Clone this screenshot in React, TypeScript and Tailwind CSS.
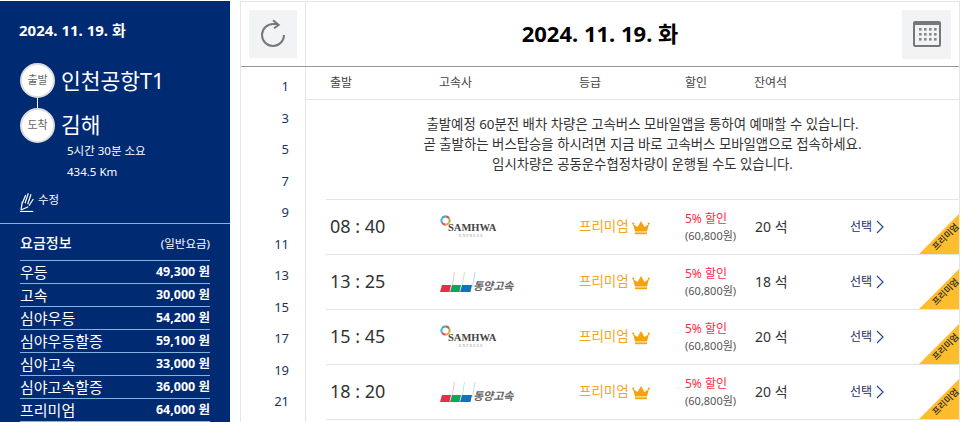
const FONT = "font-['Noto_Sans','Noto_Sans_CJK_KR',sans-serif]";

const fares: [string, string][] = [
  ['우등', '49,300 원'],
  ['고속', '30,000 원'],
  ['심야우등', '54,200 원'],
  ['심야우등할증', '59,100 원'],
  ['심야고속', '33,000 원'],
  ['심야고속할증', '36,000 원'],
  ['프리미엄', '64,000 원'],
];

const rows = [
  { time: '08 : 40', logo: 'samhwa', seats: '20 석' },
  { time: '13 : 25', logo: 'dongyang', seats: '18 석' },
  { time: '15 : 45', logo: 'samhwa', seats: '20 석' },
  { time: '18 : 20', logo: 'dongyang', seats: '20 석' },
];

const hours = [1, 3, 5, 7, 9, 11, 13, 15, 17, 19, 21];

function Samhwa() {
  return (
    <div className="relative h-[24px] w-[56px]">
      <svg viewBox="0 0 12 12" className="absolute left-0 top-0 h-[11px] w-[11px]" fill="none" strokeWidth="2.2">
        <path d="M6 1.5 A4.5 4.5 0 0 1 10 4" stroke="#e0457b" />
        <path d="M10 4 A4.5 4.5 0 0 1 10 8" stroke="#8cc63f" />
        <path d="M10 8 A4.5 4.5 0 0 1 6 10.5" stroke="#f5a623" />
        <path d="M6 10.5 A4.5 4.5 0 0 1 2 8" stroke="#e0457b" />
        <path d="M2 8 A4.5 4.5 0 0 1 2 4" stroke="#3ab4d8" />
        <path d="M2 4 A4.5 4.5 0 0 1 6 1.5" stroke="#35b7a4" />
      </svg>
      <span className="absolute left-[8px] top-[8px] font-['Liberation_Serif',serif] text-[10.5px] font-bold leading-[10px] text-[#444]">SAMHWA</span>
      <span className="absolute left-[19px] top-[18px] font-['Liberation_Serif',serif] text-[4px] leading-[5px] tracking-[1px] text-[#999]">EXPRESS</span>
    </div>
  );
}

function Dongyang() {
  return (
    <div className="flex items-end">
      <svg viewBox="0 0 36 21" className="h-[21px] w-[36px] shrink-0">
        <path d="M14.5 0 L12 15" stroke="#f5b5bd" strokeWidth="0.8" />
        <path d="M24.5 0 L22 15" stroke="#b2e2c4" strokeWidth="0.8" />
        <path d="M35 0 L32.5 15" stroke="#acd0ee" strokeWidth="0.8" />
        <path d="M2 13 H11 L9.5 20 H0 Z" fill="#ee2a48" />
        <path d="M12 13 H21 L19.5 20 H10 Z" fill="#0ea55a" />
        <path d="M22 13 H32 L30.5 20 H20 Z" fill="#1273bb" />
      </svg>
      <span className="mb-[-1px] ml-[-3px] text-[11px] font-bold italic leading-[16px] text-[#666]">동양고속</span>
    </div>
  );
}

function Crown() {
  return (
    <svg viewBox="0 0 18 15" className="ml-[3px] mt-[2px] h-[15px] w-[18px]">
      <path d="M1 4 L5.5 7 L9 1 L12.5 7 L17 4 L15 11.5 H3 Z" fill="#f4a30d" />
      <circle cx="1.2" cy="3.6" r="1.1" fill="#f4a30d" />
      <circle cx="16.8" cy="3.6" r="1.1" fill="#f4a30d" />
      <rect x="3" y="12.4" width="12" height="1.8" fill="#f4a30d" />
    </svg>
  );
}

function Row({ time, logo, seats }: { time: string; logo: string; seats: string }) {
  return (
    <div className="relative flex h-[55px] items-center border-b border-[#e5e5e5]">
      <div className="mb-[2px] w-[114px] pl-[4px] text-[18px] text-[#333]">{time}</div>
      <div className="w-[139px]">{logo === 'samhwa' ? <Samhwa /> : <Dongyang />}</div>
      <div className="mb-[2px] flex w-[106px] items-center text-[13.5px] text-[#f4a620]">
        프리미엄
        <Crown />
      </div>
      <div className="w-[70px] leading-[17px]">
        <div className="text-[12px] text-[#ff2a44]">5% 할인</div>
        <div className="text-[11px] text-[#555]">(60,800원)</div>
      </div>
      <div className="mb-[2px] w-[95px] text-[14px] text-[#333]">{seats}</div>
      <div className="mb-px flex items-center text-[12px] text-[#1c2f66]">
        선택
        <svg viewBox="0 0 8 14" className="ml-[4px] h-[14px] w-[8px]" fill="none" stroke="#274a9c" strokeWidth="1.2">
          <path d="M1 1 L7 7 L1 13" />
        </svg>
      </div>
      <div className="absolute bottom-0 right-0 h-0 w-0 border-b-[40px] border-l-[40px] border-b-[#fdbd2c] border-l-transparent" />
      <span className="absolute bottom-[12px] right-[-3px] -rotate-45 text-[9px] font-medium leading-[10px] text-[#222]">프리미엄</span>
    </div>
  );
}

export default function App() {
  return (
    <div className={`${FONT} flex h-[422px] w-[963px] overflow-hidden bg-white`}>
      <aside className="mt-px w-[230px] shrink-0 bg-[#002a71] text-white">
        <div className="h-[223px] border-b border-[#7db4e0] px-[19px] pt-[19px]">
          <div className="text-[15px] font-bold leading-[20px]">2024. 11. 19. 화</div>
          <div className="relative ml-px mt-[23px]">
            <div className="flex items-center">
              <div className="flex h-[35px] w-[35px] items-center justify-center rounded-full border-2 border-[#ddd] bg-white text-[11px] text-[#666]">출발</div>
              <div className="ml-[6px] text-[21.5px] leading-[30px]">인천공항T1</div>
            </div>
            <div className="ml-[17px] h-[10px] w-px bg-white" />
            <div className="flex items-center">
              <div className="flex h-[35px] w-[35px] items-center justify-center rounded-full border-2 border-[#ddd] bg-white text-[11px] text-[#666]">도착</div>
              <div className="mb-[2px] ml-[6px] text-[21.5px] leading-[30px]">김해</div>
            </div>
          </div>
          <div className="ml-[48px] mt-[-3px] text-[11.5px] leading-[21px]">
            <div>5시간 30분 소요</div>
            <div>434.5 Km</div>
          </div>
          <div className="mt-[9px] flex items-center">
            <svg viewBox="0 0 16 21" className="h-[21px] w-[16px]" fill="none" stroke="white" strokeWidth="1.2">
              <path d="M1 20.5 H14.3" />
              <path d="M3.3 12.3 L6.7 4 M6 12.3 L9.3 2.3 M8.7 13.3 L12 3.3 M10 14.7 L14.3 8 M2 19 L3.3 10.7 M2 19 L9.3 15.7" />
            </svg>
            <span className="mb-[3px] ml-[3px] text-[11.5px]">수정</span>
          </div>
        </div>
        <div className="px-[20px]">
          <div className="flex h-[37px] items-center justify-between border-b border-[#7db4e0]">
            <span className="text-[14px] font-medium">요금정보</span>
            <span className="mt-[3px] text-[11.5px]">(일반요금)</span>
          </div>
          {fares.map(([name, price]) => (
            <div key={name} className="flex h-[23px] items-center justify-between border-b border-[#7db4e0]">
              <span className="text-[15px]">{name}</span>
              <span className="text-[12.5px] font-bold">{price}</span>
            </div>
          ))}
        </div>
      </aside>
      <main className="ml-[10px] mr-[3px] mt-px flex h-[421px] flex-1 flex-col border-x border-t border-[#e5e5e5]">
        <header className="flex h-[65px] shrink-0 items-center border-b border-[#999]">
          <div className="flex h-full w-[65px] shrink-0 items-center border-r border-[#e5e5e5] pl-[8px]">
            <div className="flex h-[48px] w-[48px] items-center justify-center bg-[#f2f3f5]">
              <svg viewBox="0 0 48 48" className="h-[48px] w-[48px]" fill="none" stroke="#777" strokeWidth="2">
                <path d="M35 25 A11 11 0 1 1 24 14 H29" />
                <path d="M24 10.3 L29.7 15 L25 18.3" />
              </svg>
            </div>
          </div>
          <div className="mb-[2px] flex-1 pr-[8px] text-center text-[22px] font-bold text-black">2024. 11. 19. 화</div>
          <div className="mr-[8px] flex h-[49px] w-[49px] items-center justify-center bg-[#f2f3f5]">
            <svg viewBox="0 0 28 26" className="h-[26px] w-[28px]">
              <rect x="1" y="1" width="26" height="24" rx="1" fill="none" stroke="#777" strokeWidth="2" />
              <rect x="1" y="1" width="26" height="3" fill="#777" />
              {[7, 12, 17].map((y) =>
                [6, 11, 16, 21].map((x) => <rect key={`${x}-${y}`} x={x} y={y} width="2.6" height="2.6" fill="#888" />),
              )}
            </svg>
          </div>
        </header>
        <div className="flex min-h-0 flex-1">
          <div className="w-[65px] shrink-0 border-r border-[#e5e5e5] pr-[16px] pt-[4px] text-right text-[13px] leading-[31.5px] text-[#17365f]">
            {hours.map((h) => (
              <div key={h}>{h}</div>
            ))}
          </div>
          <div className="min-w-0 flex-1">
            <div className="flex h-[33px] items-center border-b border-[#e5e5e5] pl-[24px] text-[12px] text-[#444]">
              <span className="w-[109px]">출발</span>
              <span className="w-[140px]">고속사</span>
              <span className="w-[106px]">등급</span>
              <span className="w-[69px]">할인</span>
              <span>잔여석</span>
            </div>
            <div className="ml-[20px]">
              <div className="h-[100px] border-b border-[#e5e5e5] pt-[14px] text-center text-[13.4px] leading-[20px] text-[#333]">
                <p>출발예정 60분전 배차 차량은 고속버스 모바일앱을 통하여 예매할 수 있습니다.</p>
                <p>곧 출발하는 버스탑승을 하시려면 지금 바로 고속버스 모바일앱으로 접속하세요.</p>
                <p>임시차량은 공동운수협정차량이 운행될 수도 있습니다.</p>
              </div>
              {rows.map((r, i) => (
                <Row key={i} {...r} />
              ))}
            </div>
          </div>
        </div>
      </main>
    </div>
  );
}
